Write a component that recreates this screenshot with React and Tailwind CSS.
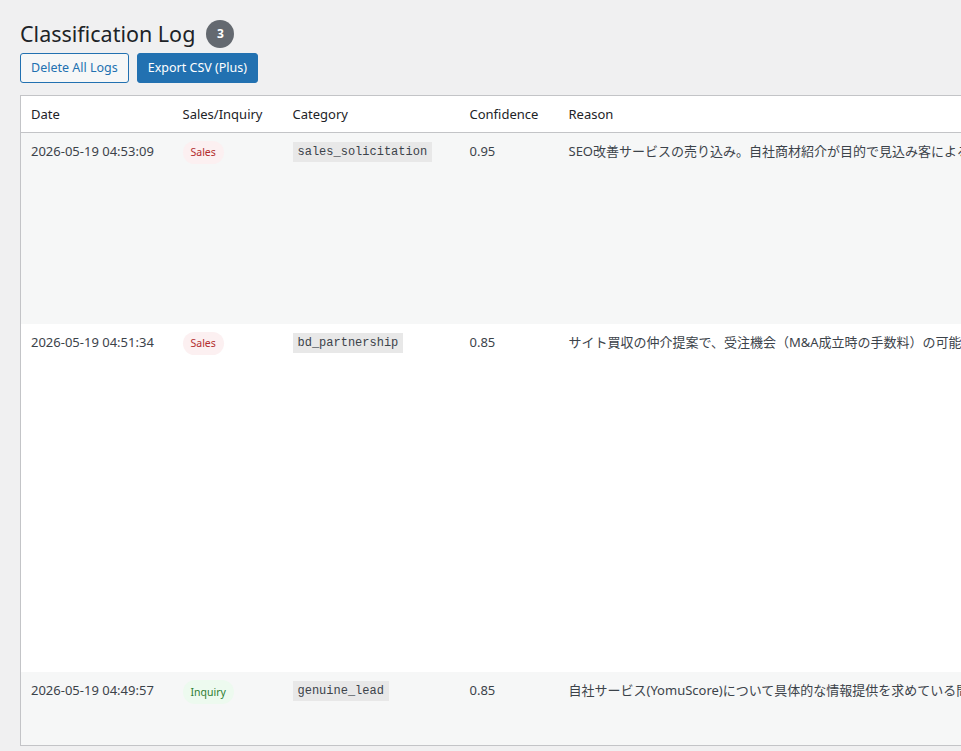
import { useState } from "react";

const logs = [
  {
    id: 3,
    date: "2026-05-19 04:53:09",
    type: "sales",
    category: "sales_solicitation",
    confidence: "0.95",
    reason:
      "SEO改善サービスの売り込み。自社商材紹介が目的で見込み客による問い合わせではないため営業と判断。",
    height: "h-[191px]",
  },
  {
    id: 2,
    date: "2026-05-19 04:51:34",
    type: "sales",
    category: "bd_partnership",
    confidence: "0.85",
    reason:
      "サイト買収の仲介提案で、受注機会（M&A成立時の手数料）の可能性を目的とした営業連絡と判断。",
    height: "h-[348px]",
  },
  {
    id: 1,
    date: "2026-05-19 04:49:57",
    type: "inquiry",
    category: "genuine_lead",
    confidence: "0.85",
    reason:
      "自社サービス(YomuScore)について具体的な情報提供を求めている問い合わせで、導入検討の可能性が高い。",
    height: "h-[74px]",
  },
];

const TypeBadge = ({ type }) =>
  type === "sales" ? (
    <span className="inline-block rounded-full bg-[#fcf0f1] px-[8px] py-[3px] text-[10.5px] leading-[17px] text-[#b32d2e]">
      Sales
    </span>
  ) : (
    <span className="inline-block rounded-full bg-[#edfaef] px-[8px] py-[3px] text-[10.5px] leading-[18px] text-[#2e7d32]">
      Inquiry
    </span>
  );

export default function App() {
  const [rows] = useState(logs);

  return (
    <div
      className="min-h-[751px] w-full overflow-hidden bg-[#f0f0f1] text-[13px] text-[#3c434a]"
      style={{ fontFamily: '"Noto Sans", "Noto Sans CJK JP", sans-serif' }}
    >
      <div className="pl-5">
        {/* Heading */}
        <div className="flex items-center gap-[11px] pt-[19px] pb-[5px]">
          <h1 className="text-[21.5px] leading-[29px] font-normal text-[#1d2327]">
            Classification Log
          </h1>
          <span className="flex h-[28px] w-[28px] items-center justify-center rounded-full bg-[#646970] text-[12px] font-bold text-white">
            {rows.length}
          </span>
        </div>

        {/* Actions */}
        <div className="flex gap-2">
          <button className="h-[30px] rounded-[3px] border border-[#2271b1] bg-[#f6f7f7] px-[10px] text-[12.5px] text-[#2271b1]">
            Delete All Logs
          </button>
          <button className="h-[30px] rounded-[3px] border border-[#2271b1] bg-[#2271b1] px-[10px] text-[12.5px] text-white">
            Export CSV (Plus)
          </button>
        </div>

        {/* Log table */}
        <div className="mt-[12px]">
          <table className="w-[1400px] table-fixed border-collapse border border-[#c3c4c7] bg-white">
            <colgroup>
              <col className="w-[152px]" />
              <col className="w-[110px]" />
              <col className="w-[177px]" />
              <col className="w-[99px]" />
              <col />
            </colgroup>
            <thead>
              <tr className="h-[37px] border-b border-[#c3c4c7] text-left text-[#1d2327]">
                <th className="px-[10px] pt-[1px] font-normal">Date</th>
                <th className="px-[10px] pt-[1px] font-normal">Sales/Inquiry</th>
                <th className="px-[10px] pt-[1px] font-normal">Category</th>
                <th className="px-[10px] pt-[1px] font-normal">Confidence</th>
                <th className="px-[10px] pt-[1px] font-normal">Reason</th>
              </tr>
            </thead>
            <tbody>
              {rows.map((row, i) => (
                <tr
                  key={row.id}
                  className={`${row.height} align-top ${i % 2 === 0 ? "bg-[#f6f7f7]" : "bg-white"}`}
                >
                  <td className="px-[10px] pt-[9px] leading-[19px]">{row.date}</td>
                  <td className="px-[10px] pt-[8px]">
                    <TypeBadge type={row.type} />
                  </td>
                  <td className="px-[10px] pt-[8px]">
                    <code
                      className="inline-block bg-[#e8e8e8] px-[5px] py-[1px] text-[12px] leading-[18px] text-[#3c434a]"
                      style={{ fontFamily: '"Liberation Mono", monospace' }}
                    >
                      {row.category}
                    </code>
                  </td>
                  <td className="px-[10px] pt-[9px] leading-[19px]">{row.confidence}</td>
                  <td className="whitespace-nowrap px-[10px] pt-[9px] leading-[19px]">
                    {row.reason}
                  </td>
                </tr>
              ))}
            </tbody>
          </table>
        </div>
      </div>
    </div>
  );
}
